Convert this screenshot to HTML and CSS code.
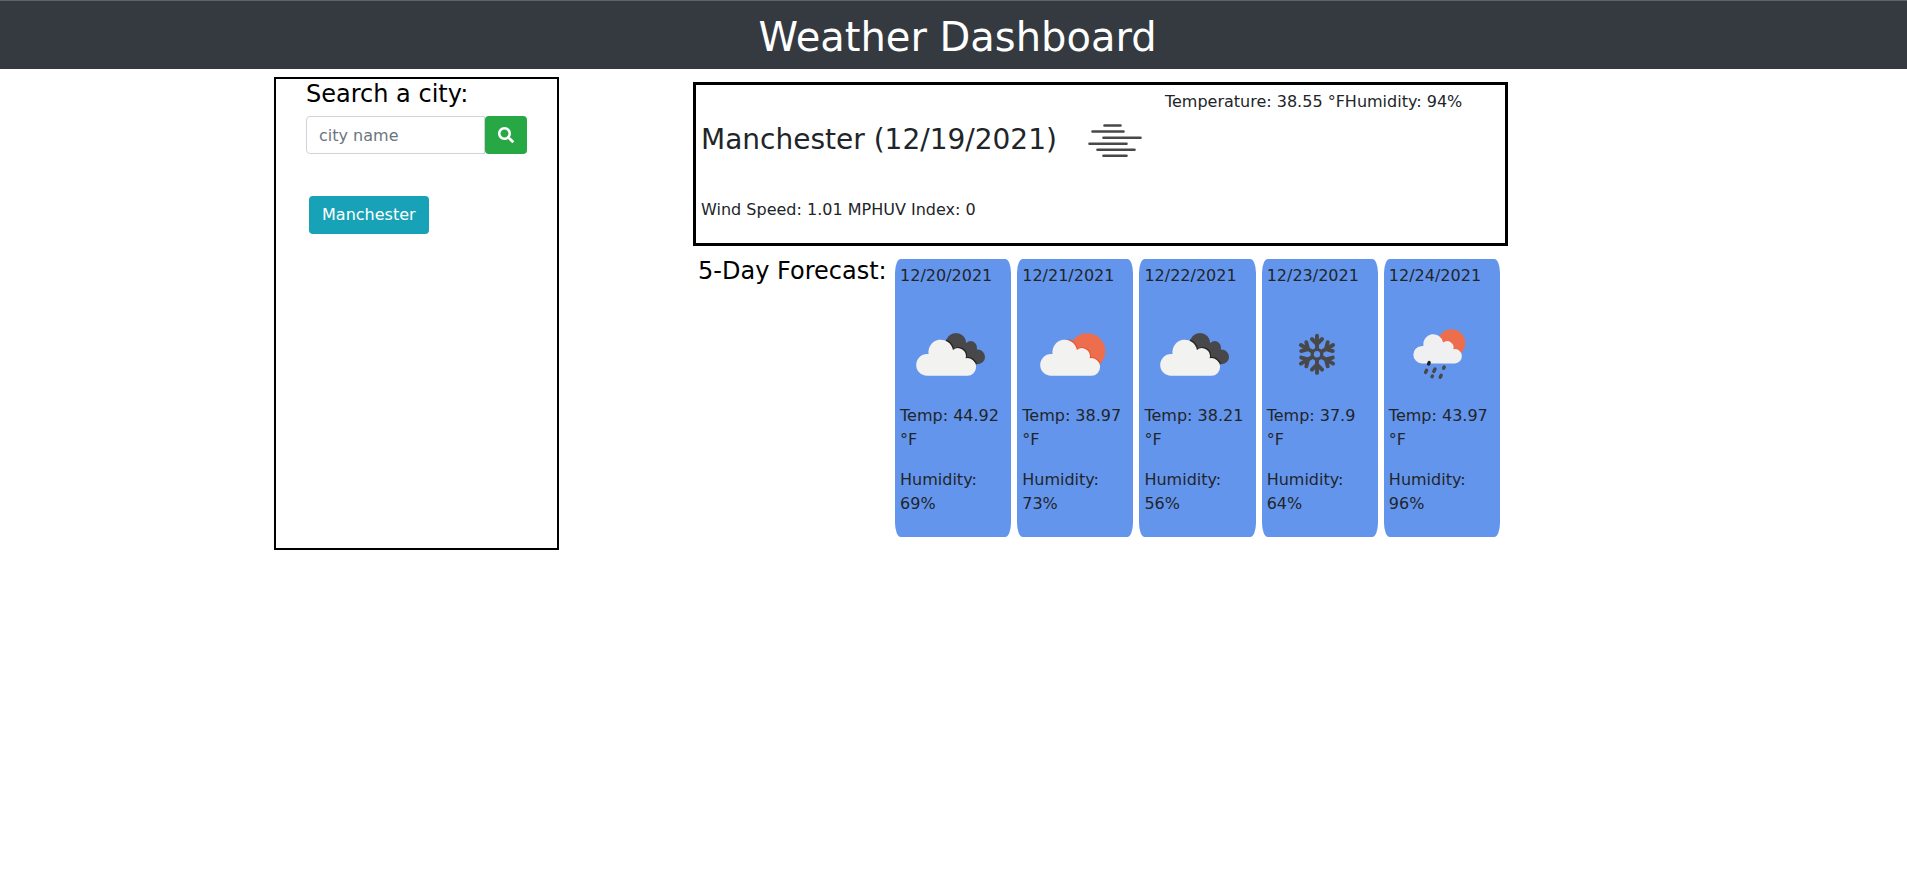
FILE: index.html
```html
<!DOCTYPE html>
<html lang="en">
<head>
<meta charset="utf-8">
<title>Weather Dashboard</title>
<meta name="viewport" content="width=device-width, initial-scale=1">
<link rel="stylesheet" href="styles.css">
</head>
<body>
<svg class="sprite" aria-hidden="true">
  <symbol id="cloud" viewBox="0 0 100 100">
    <path d="M27 71.7a10.8 10.8 0 0 1 0-21.6h1.6a12.3 12.3 0 1 1 24.3-4.2a8 8 0 0 1 12.7 8.4a8.8 8.8 0 1 1 1.1 17.4z"/>
  </symbol>
  <clipPath id="behind-cloud"><path d="M46 28H86V60.3H46z"/></clipPath>
  <symbol id="broken-clouds" viewBox="0 0 100 100">
    <g fill="#48484a"><circle cx="56" cy="39.3" r="10.3"/><circle cx="70.7" cy="43.3" r="6.2"/><circle cx="77.7" cy="52.9" r="7.3"/><path d="M50 42L66 40L77 45L78 60H66L50 50z"/></g>
    <g clip-path="url(#behind-cloud)"><use href="#cloud" width="100" height="100" fill="#222" x="1" y="-1"/></g>
    <use href="#cloud" width="100" height="100" fill="#f2f2f0"/>
  </symbol>
  <symbol id="sun-cloud" viewBox="0 0 100 100">
    <circle cx="65.3" cy="47.2" r="18" fill="#ec6e4c"/>
    <g clip-path="url(#behind-cloud)"><use href="#cloud" width="100" height="100" fill="#e8502f" x="2.800" y="-.8"/></g>
    <use href="#cloud" width="100" height="100" fill="#f2f2f0" x="2"/>
  </symbol>
  <symbol id="snow" viewBox="0 0 100 100">
    <g fill="none" stroke="#48484a" stroke-width="3.9" stroke-linecap="round">
      <circle cx="50" cy="50.3" r="4.8" stroke-width="3.2"/>
      <g id="arm"><path d="M50 45V31.7M50 40L44.900 35M50 40L55.100 35"/></g>
      <use href="#arm" transform="rotate(60 50 50.3)"/>
      <use href="#arm" transform="rotate(120 50 50.3)"/>
      <use href="#arm" transform="rotate(180 50 50.3)"/>
      <use href="#arm" transform="rotate(240 50 50.3)"/>
      <use href="#arm" transform="rotate(300 50 50.3)"/>
    </g>
  </symbol>
  <symbol id="rain" viewBox="0 0 100 100">
    <circle cx="62.5" cy="39" r="13.8" fill="#ec6e4c"/>
    <g transform="translate(11.200 1.300) scale(.81)"><use href="#cloud" width="100" height="100" fill="#f0f0f2"/></g>
    <g stroke="#48484a" stroke-width="3.4" stroke-linecap="round">
      <path d="M40.2 58.6l-.6 1.4" stroke="#222"/>
      <path d="M37.6 66.2l-1 2.2M46 65l-1.2 2.4M55.2 63l-.6 1.2M43.4 72l-.4.8M52.2 71.2l-1 2"/>
    </g>
  </symbol>
</svg>

<header class="banner"><h1>Weather Dashboard</h1></header>

<main class="dashboard">
  <aside class="search-panel">
    <form class="search">
      <label class="heading" for="city">Search a city:</label>
      <div class="search-row">
        <input id="city" class="city-input" type="text" placeholder="city name">
        <button class="search-button" type="button" aria-label="Search">
          <svg viewBox="0 0 512 512" width="16" height="16" fill="currentColor"><path d="M505 442.7L405.3 343c-4.500-4.500-10.600-7-17-7H372c27.600-35.300 44-79.700 44-128C416 93.100 322.900 0 208 0S0 93.100 0 208s93.100 208 208 208c48.300 0 92.700-16.400 128-44v16.300c0 6.400 2.500 12.500 7 17l99.700 99.700c9.400 9.400 24.600 9.400 33.900 0l28.300-28.300c9.400-9.400 9.400-24.600.1-34zM208 336c-70.700 0-128-57.200-128-128 0-70.700 57.200-128 128-128 70.700 0 128 57.200 128 128 0 70.700-57.200 128-128 128z"/></svg>
        </button>
      </div>
    </form>
    <button class="history-button" type="button">Manchester</button>
  </aside>

  <div class="results">
    <section class="current">
      <div class="current-row">
        <h2 class="city-title">Manchester (12/19/2021)</h2>
        <svg class="weather-icon" viewBox="0 0 100 100" role="img" aria-label="Mist">
          <path d="M39.500 35.500h16M27.500 41.500h31M38.500 47.700h37M24.500 53.800h37M32.500 59.800h37M38.500 65.700h23" stroke="#48484a" stroke-width="2.600" stroke-linecap="round"/>
        </svg>
        <p>Temperature: 38.55 °F</p><p>Humidity: 94%</p>
      </div>
      <div class="current-row"><p>Wind Speed: 1.01 MPH</p><p>UV Index: 0</p></div>
    </section>

    <section class="forecast">
      <h2 class="heading forecast-title">5-Day Forecast:</h2>
      <div class="cards">
        <article class="card"><p>12/20/2021</p><svg class="weather-icon"><use href="#broken-clouds"/></svg><p>Temp: 44.92 °F</p><p>Humidity: 69%</p></article>
        <article class="card"><p>12/21/2021</p><svg class="weather-icon"><use href="#sun-cloud"/></svg><p>Temp: 38.97 °F</p><p>Humidity: 73%</p></article>
        <article class="card"><p>12/22/2021</p><svg class="weather-icon"><use href="#broken-clouds"/></svg><p>Temp: 38.21 °F</p><p>Humidity: 56%</p></article>
        <article class="card"><p>12/23/2021</p><svg class="weather-icon"><use href="#snow"/></svg><p>Temp: 37.9 °F</p><p>Humidity: 64%</p></article>
        <article class="card"><p>12/24/2021</p><svg class="weather-icon"><use href="#rain"/></svg><p>Temp: 43.97 °F</p><p>Humidity: 96%</p></article>
      </div>
    </section>
  </div>
</main>
</body>
</html>
```
FILE: styles.css
```css
* { box-sizing: border-box; }

body {
  margin: 0;
  background: #fff;
  color: #212529;
  font: 16px/24px Verdana, "DejaVu Sans", sans-serif;
}

h1, h2, p { margin: 0; font-weight: 400; }

button, input { font: inherit; }

.sprite { position: absolute; width: 0; height: 0; }

.banner {
  padding: 12px 0 8px 8px;
  border-top: 1px solid #5f6368;
  background: #343a40;
  color: #fff;
  text-align: center;
}

.banner h1 { font-size: 40px; line-height: 48px; }

.dashboard {
  display: grid;
  grid-template-columns: minmax(0, 285fr) minmax(0, 815fr);
  column-gap: 10.86%;
  align-items: start;
  padding: 8px 20.92% 0 14.37%;
}

.search-panel {
  min-height: 473px;
  padding: 0 30px;
  border: 2px solid #000;
}

.heading {
  display: block;
  color: #000;
  font-size: 24px;
  line-height: 30px;
  white-space: nowrap;
}

.search-row { display: flex; margin-top: 7px; }

.city-input {
  flex: 1;
  width: 0;
  min-width: 0;
  height: 38px;
  padding: 6px 12px;
  border: 1px solid #ced4da;
  border-radius: 4px 0 0 4px;
}

.city-input::placeholder { color: #6c757d; opacity: 1; }

.search-button, .history-button {
  height: 38px;
  padding: 6px 12px;
  border: 1px solid transparent;
  border-radius: 4px;
  color: #fff;
}

.search-button { background: #28a745; }
.search-button svg { display: block; }
.history-button { margin: 42px 3px 0; background: #17a2b8; }

.current {
  margin-top: 5px;
  padding: 5px;
  border: 3px solid #000;
}

.current-row { display: flex; }
.current-row p { white-space: nowrap; }
.current-row + .current-row { margin: 8px 0 16px; }

.city-title {
  align-self: center;
  margin-right: 8px;
  font-size: 28px;
  line-height: 34px;
  white-space: nowrap;
}

.weather-icon { display: block; flex: none; width: 100px; height: 100px; }

.forecast {
  display: flex;
  margin-top: 10px;
  padding: 0 8px 0 5px;
}

.forecast-title { flex: 0 0 197px; }

.cards {
  display: grid;
  flex: 1;
  grid-template-columns: repeat(5, minmax(0, 1fr));
  gap: 6px;
  margin-top: 3px;
}

.card {
  padding: 5px;
  border-radius: 5%;
  background: #6495ed;
}

.card p { margin-bottom: 16px; }
```
